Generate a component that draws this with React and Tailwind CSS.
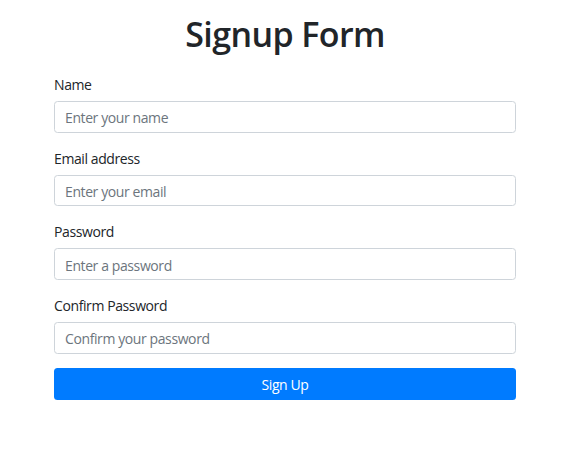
export default function App() {
  const fields = [
    { label: "Name", type: "text", ph: "Enter your name" },
    { label: "Email address", type: "email", ph: "Enter your email" },
    { label: "Password", type: "password", ph: "Enter a password" },
    { label: "Confirm Password", type: "password", ph: "Confirm your password" },
  ];
  return (
    <div className="min-h-[467px] bg-white font-['Open_Sans',sans-serif] text-[#212529]">
      <div className="w-[462px] ml-[54px] pt-[13px]">
        <h1 className="text-center text-[34px] leading-[42px] font-semibold tracking-[-0.6px] mb-[18px]">Signup Form</h1>
        <form className="flex flex-col" onSubmit={(e) => e.preventDefault()}>
          {fields.map((f) => (
            <div key={f.label} className="mb-[14px] flex flex-col">
              <label className="text-[14px] leading-[24px] mb-[4px] tracking-[-0.4px]">{f.label}</label>
              <input
                type={f.type}
                placeholder={f.ph}
                className="h-[31.67px] w-full rounded-[3.5px] border border-[#ced4da] px-[10px] pt-[2px] text-[14px] tracking-[-0.4px] text-[#495057] placeholder:text-[#6c757d] outline-none"
              />
            </div>
          ))}
          <button
            type="submit"
            className="h-[32px] w-full rounded-[3.5px] bg-[#007bff] pt-[1px] text-white text-[14px] tracking-[-0.4px]"
          >
            Sign Up
          </button>
        </form>
      </div>
    </div>
  );
}
